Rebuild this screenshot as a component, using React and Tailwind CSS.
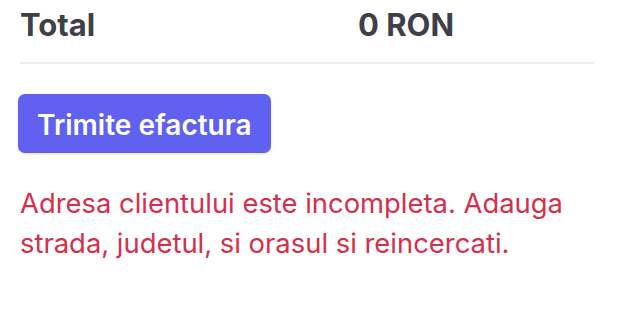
export default function App() {
  return (
    <div className="w-[620px] h-[320px] bg-white px-5 font-['Inter',sans-serif]">
      <div className="flex items-center h-[50px] text-[31px] font-bold text-[#3f3f4a]">
        <div className="w-[338px]">Total</div>
        <div>0 RON</div>
      </div>
      <div className="h-[2px] bg-[#ececf1] mt-[12px] w-[574px]"></div>
      <button className="mt-[30px] -ml-[2px] h-[59px] pt-[3px] px-[19px] rounded-[7px] bg-[#6061f0] text-white text-[28px] font-semibold shadow-sm flex items-center">
        Trimite efactura
      </button>
      <p className="mt-[30px] text-[27.4px] leading-[40px] text-[#d52f4b]">
        Adresa clientului este incompleta. Adauga strada, judetul, si orasul si reincercati.
      </p>
    </div>
  );
}
